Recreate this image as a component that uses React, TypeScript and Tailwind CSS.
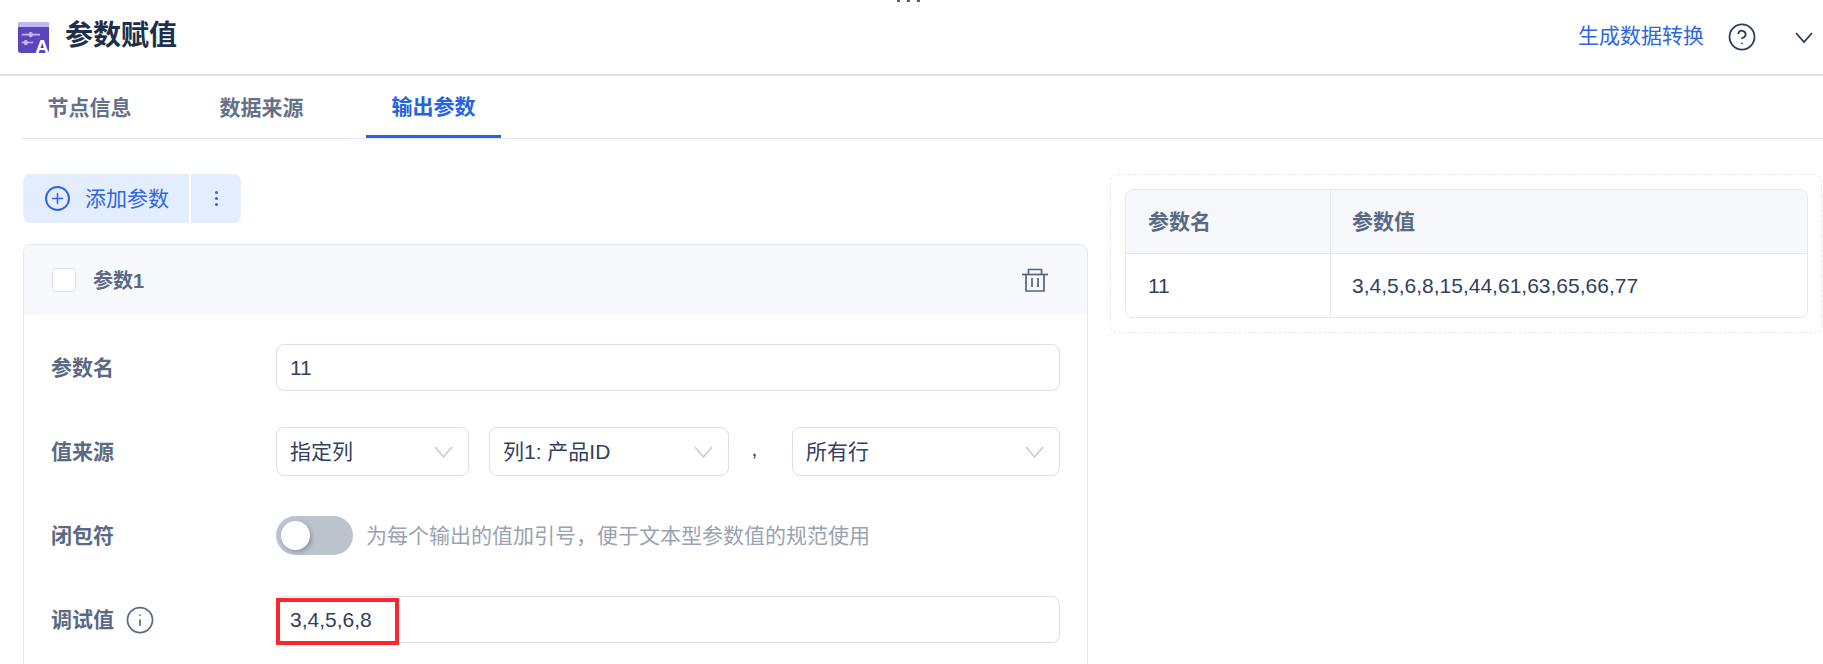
import { CircleHelp, Info, Plus } from "lucide-react"

const font = { fontFamily: '"Liberation Sans", "Noto Sans CJK SC", sans-serif' }

function Logo() {
  return (
    <svg width="31" height="31" viewBox="0 0 31 31" className="overflow-visible">
      <rect x="0" y="0" width="31" height="31" rx="3" fill="#5a45bd" />
      <path d="M3 0h25a3 3 0 0 1 3 3v2H0V3a3 3 0 0 1 3-3z" fill="#c4b6f2" />
      <path d="M3.6 12.6h18.4M3.6 20.5h11.4" stroke="#c4b6f2" strokeWidth="1.6" />
      <rect x="10.7" y="10" width="4" height="5.2" rx="1.6" fill="#c4b6f2" />
      <rect x="5.7" y="17.9" width="4" height="5.2" rx="1.6" fill="#c4b6f2" />
      <text x="24" y="31" textAnchor="middle" fontSize="19" fontWeight="700" fill="#fff" fontFamily="Liberation Sans">A</text>
    </svg>
  )
}

function Chevron({ width, height, color, stroke }: { width: number; height: number; color: string; stroke: number }) {
  return (
    <svg width={width} height={height} viewBox={`0 0 ${width} ${height}`} fill="none">
      <path d={`M1 1 L${width / 2} ${height - 1} L${width - 1} 1`} stroke={color} strokeWidth={stroke} />
    </svg>
  )
}

function TrashIcon() {
  return (
    <svg width="26" height="24" viewBox="0 0 26 24" fill="none" stroke="#55647f" strokeWidth="1.7">
      <path d="M0 6.5h26" />
      <path d="M6.5 6V1.5h13V6" />
      <path d="M4 6.5V23h18V6.5" />
      <path d="M10 10v9M16 10v9" />
    </svg>
  )
}

function Select({ label, className }: { label: string; className: string }) {
  return (
    <div className={`flex h-[49px] items-center justify-between rounded-lg border border-[#dcdfe8] bg-white pl-[13px] pr-[15px] ${className}`}>
      <span>{label}</span>
      <Chevron width={19} height={12} color="#c0c6d2" stroke={1.3} />
    </div>
  )
}

function Label({ children }: { children: React.ReactNode }) {
  return <div className="flex w-[225px] items-center gap-[10px] font-semibold text-[#5a6a85]">{children}</div>
}

export default function App() {
  return (
    <div className="relative h-[664px] w-[1823px] overflow-hidden bg-white text-[21px] text-[#31415f]" style={font}>
      {/* clipped marks at the top edge */}
      <div className="absolute left-[897px] top-0 flex gap-[7px]">
        <div className="h-[2px] w-[3px] bg-[#4a5f85]" />
        <div className="h-[2px] w-[3px] bg-[#4a5f85]" />
        <div className="h-[2px] w-[3px] bg-[#4a5f85]" />
      </div>

      {/* Header */}
      <div className="flex h-[76px] items-center border-b-2 border-[#e0e1e8] pl-[18px] pr-[10px]">
        <Logo />
        <h1 className="mb-[2px] ml-[16px] text-[28px] font-bold text-[#1e2f4a]">参数赋值</h1>
        <div className="ml-auto flex items-center">
          <span className="mb-[2px] text-[#2f66e0]">生成数据转换</span>
          <CircleHelp className="ml-[23px] h-[30px] w-[30px] text-[#2a3b5c]" strokeWidth={1.4} />
          <div className="ml-[38px] flex">
            <Chevron width={18} height={11} color="#2a3b5c" stroke={1.8} />
          </div>
        </div>
      </div>

      {/* Tabs */}
      <div className="ml-[22px] flex h-[63px] items-stretch gap-[37px] border-b border-[#e6e8f0] font-semibold text-[#64718a]">
        <div className="flex w-[135px] items-center justify-center pt-[2px]">节点信息</div>
        <div className="flex w-[135px] items-center justify-center pt-[2px]">数据来源</div>
        <div className="flex w-[135px] items-center justify-center border-b-[3px] border-[#2563e0] pt-[2px] text-[#2563e0]">输出参数</div>
      </div>

      <div className="flex pt-[35px]">
        {/* Left column */}
        <div className="ml-[23px] w-[1065px]">
          <div className="flex h-[49px] w-[218px] overflow-hidden rounded-lg bg-[#e3edfd] text-[#2f66e0]">
            <div className="flex w-[168px] items-center border-r-2 border-white pl-[22px]">
              <span className="flex h-[25px] w-[25px] items-center justify-center rounded-full border-2 border-[#2f66e0]">
                <Plus className="h-[17px] w-[17px]" strokeWidth={2.2} />
              </span>
              <span className="ml-[15px]">添加参数</span>
            </div>
            <div className="flex flex-1 flex-col items-center justify-center gap-[3px]">
              <div className="h-[3px] w-[3px] rounded-full bg-[#2f66e0]" />
              <div className="h-[3px] w-[3px] rounded-full bg-[#2f66e0]" />
              <div className="h-[3px] w-[3px] rounded-full bg-[#2f66e0]" />
            </div>
          </div>

          <div className="mt-[21px] h-[500px] rounded-lg border border-[#e4e8f2]">
            <div className="flex h-[70px] items-center rounded-t-lg bg-[#f7f8fc] pl-[28px] pr-[39px]">
              <div className="h-[24px] w-[24px] rounded border border-[#dcdfe8] bg-white" />
              <span className="ml-[17px] pt-[2px] text-[20px] font-semibold text-[#5a6a85]">参数1</span>
              <div className="ml-auto flex">
                <TrashIcon />
              </div>
            </div>

            <div className="flex flex-col pl-[27px] pr-[27px] pt-[29px]">
              <div className="flex items-center">
                <Label>参数名</Label>
                <div className="flex h-[47px] w-[784px] items-center rounded-lg border border-[#dcdfe8] px-[13px]">11</div>
              </div>

              <div className="mt-[36px] flex items-center">
                <Label>值来源</Label>
                <Select label="指定列" className="w-[193px]" />
                <Select label="列1: 产品ID" className="ml-[20px] w-[240px]" />
                <span className="w-[63px] pb-[6px] pr-[12px] text-center leading-none">,</span>
                <Select label="所有行" className="w-[268px]" />
              </div>

              <div className="mt-[40px] flex items-center">
                <Label>闭包符</Label>
                <div className="flex h-[39px] w-[77px] items-center rounded-full bg-[#bdc3cc] pl-[5px]">
                  <div className="h-[29px] w-[29px] rounded-full bg-white shadow-[2px_2px_4px_rgba(60,70,90,0.35)]" />
                </div>
                <span className="ml-[13px] text-[#9aa3b2]">为每个输出的值加引号，便于文本型参数值的规范使用</span>
              </div>

              <div className="mt-[41px] flex items-center">
                <Label>
                  调试值
                  <Info className="ml-[1px] h-[30px] w-[30px] text-[#5a6a85]" strokeWidth={1.4} />
                </Label>
                <div className="relative flex h-[47px] w-[784px] items-center rounded-lg border border-[#dcdfe8] px-[13px]">
                  3,4,5,6,8
                  {/* red annotation box */}
                  <div className="absolute left-[-1px] top-[1px] h-[47px] w-[123px] border-4 border-[#fb2630]" />
                </div>
              </div>
            </div>
          </div>
        </div>

        {/* Right column */}
        <div className="ml-[22px] h-[159px] w-[712px] rounded-lg border border-dashed border-[#e4e8f2] pl-[14px] pr-[13px] pt-[14px]">
          <div className="h-[129px] overflow-hidden rounded-lg border border-[#e6e8f0]">
            <div className="flex h-[64px] border-b border-[#e6e8f0] bg-[#f7f8fc] font-semibold text-[#5a6a85]">
              <div className="flex w-[205px] items-center border-r border-[#e6e8f0] pl-[22px]">参数名</div>
              <div className="flex flex-1 items-center pl-[21px]">参数值</div>
            </div>
            <div className="flex h-[63px]">
              <div className="flex w-[205px] items-center border-r border-[#e6e8f0] pl-[22px]">11</div>
              <div className="flex flex-1 items-center pl-[21px]">3,4,5,6,8,15,44,61,63,65,66,77</div>
            </div>
          </div>
        </div>
      </div>
    </div>
  )
}
